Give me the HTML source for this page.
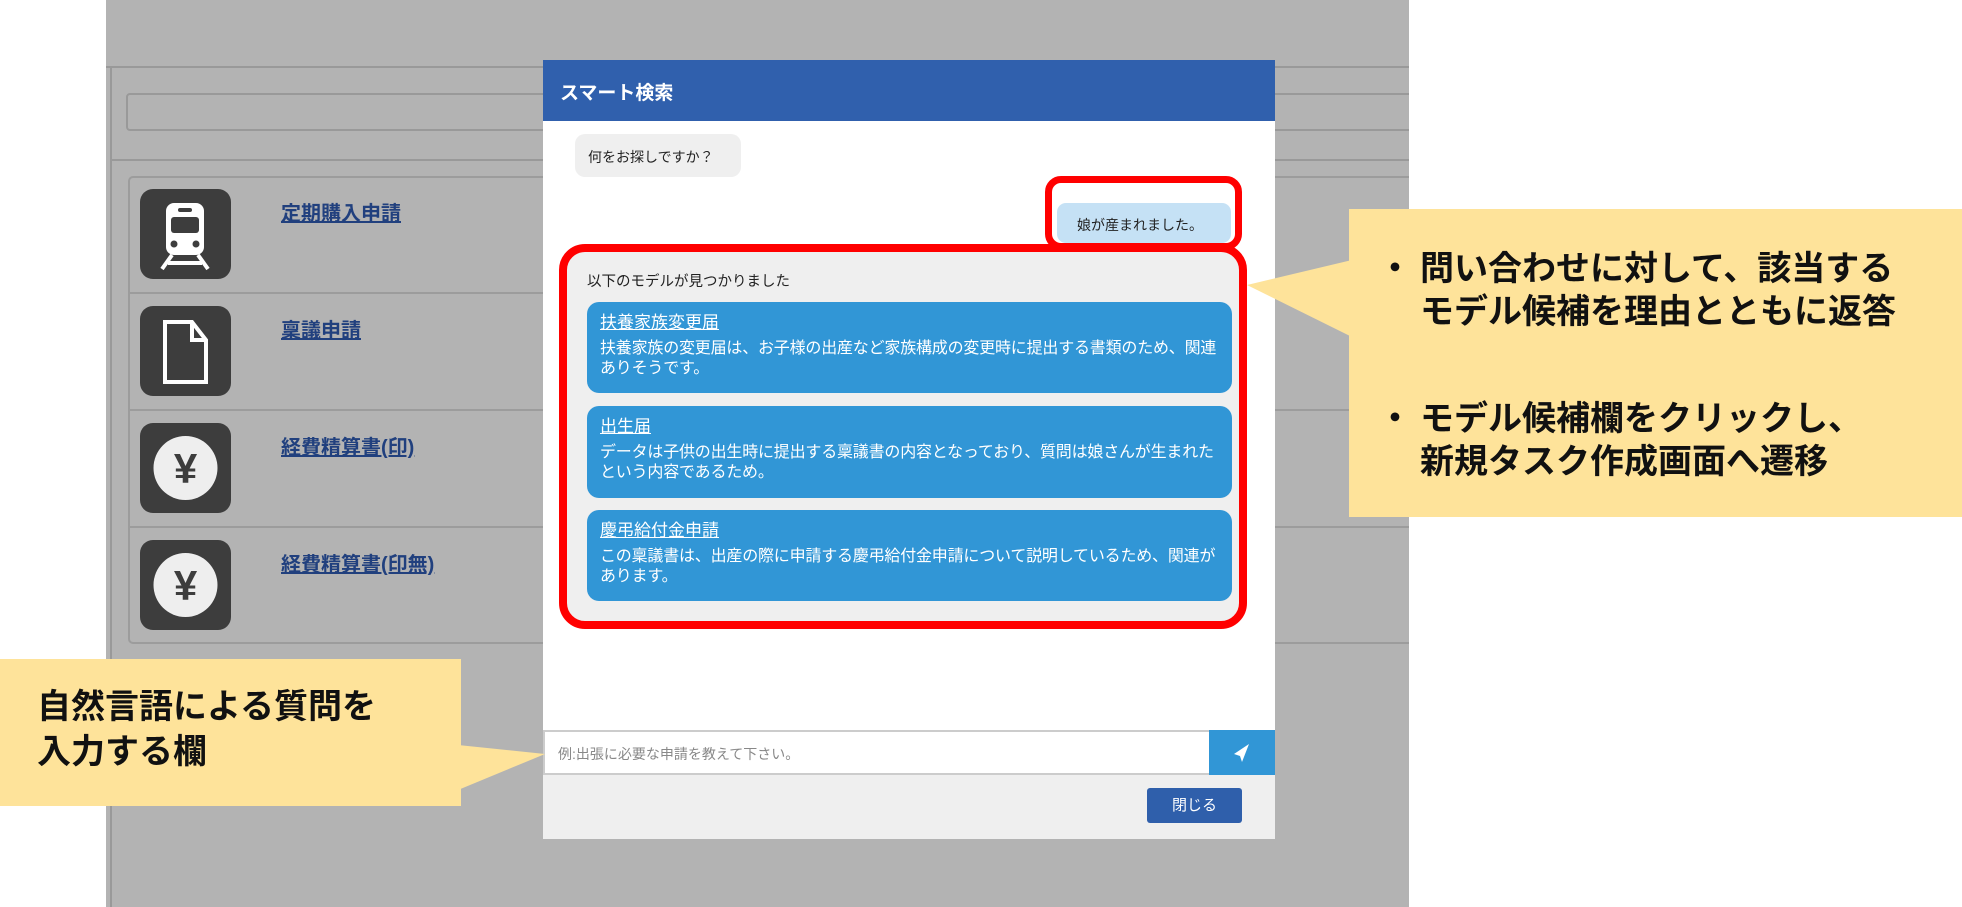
<!DOCTYPE html>
<html><head><meta charset="utf-8"><style>
*{margin:0;padding:0;box-sizing:border-box}
body{width:1962px;height:907px;position:relative;overflow:hidden;background:#fff;font-family:"Liberation Sans","Noto Sans CJK JP",sans-serif}
.a{position:absolute}
.gray{left:106px;top:0;width:1303px;height:907px;background:#b3b3b3}
.icon{left:140px;width:91px;height:90px;background:#3d3d3d;border-radius:13px}
.lnk{left:281px;font-size:20px;font-weight:bold;color:#21407e;text-decoration:underline}
.card{left:587px;width:645px;background:#3196d6;border-radius:12px;color:#fff;padding:10px 10px 0 13px}
.card .t{font-size:17px;text-decoration:underline;line-height:22px;margin-bottom:5px}
.card .d{font-size:16px;line-height:20px;letter-spacing:-0.2px;white-space:nowrap}
.call{background:#fee39a;color:#111;font-weight:bold}
</style></head><body>
<div class="a gray"></div>
<div class="a" style="left:106px;top:66px;width:1303px;height:2px;background:#999"></div>
<div class="a" style="left:110px;top:66px;width:2px;height:841px;background:#999"></div>
<div class="a" style="left:126px;top:93px;width:1300px;height:38px;border:2px solid #999;border-radius:4px"></div>
<div class="a" style="left:112px;top:159px;width:1297px;height:2px;background:#999"></div>
<div class="a" style="left:128px;top:176px;width:1300px;height:468px;border:2px solid #9c9c9c;border-radius:5px"></div>
<div class="a" style="left:128px;top:292px;width:1281px;height:2px;background:#9c9c9c"></div>
<div class="a" style="left:128px;top:409px;width:1281px;height:2px;background:#9c9c9c"></div>
<div class="a" style="left:128px;top:526px;width:1281px;height:2px;background:#9c9c9c"></div>
<div class="a" style="left:1409px;top:0;width:553px;height:907px;background:#fff"></div>

<div class="a icon" style="top:189px"><svg width="91" height="90" viewBox="0 0 91 90"><rect x="26" y="14" width="38" height="52" rx="8" fill="#fff"/><rect x="31" y="28" width="28" height="16" rx="3" fill="#3d3d3d"/><rect x="38" y="19" width="14" height="4" rx="2" fill="#3d3d3d"/><circle cx="34" cy="55" r="3.5" fill="#3d3d3d"/><circle cx="56" cy="55" r="3.5" fill="#3d3d3d"/><path d="M32 66 L22 80 M58 66 L68 80 M28 74 H62" stroke="#fff" stroke-width="4"/></svg></div>
<div class="a lnk" style="top:197px">定期購入申請</div>
<div class="a icon" style="top:306px"><svg width="91" height="90" viewBox="0 0 91 90"><path d="M25 16 H52 L66 34 V76 H25 Z" fill="none" stroke="#fff" stroke-width="4"/><path d="M52 16 V34 H66" fill="none" stroke="#fff" stroke-width="4"/></svg></div>
<div class="a lnk" style="top:314px">稟議申請</div>
<div class="a icon" style="top:423px"><svg width="91" height="90" viewBox="0 0 91 90"><circle cx="45.5" cy="45" r="32" fill="#eee"/><text x="45.5" y="60" font-size="42" font-weight="bold" text-anchor="middle" fill="#3d3d3d" font-family="Liberation Sans,sans-serif">¥</text></svg></div>
<div class="a lnk" style="top:431px">経費精算書(印)</div>
<div class="a icon" style="top:540px"><svg width="91" height="90" viewBox="0 0 91 90"><circle cx="45.5" cy="45" r="32" fill="#eee"/><text x="45.5" y="60" font-size="42" font-weight="bold" text-anchor="middle" fill="#3d3d3d" font-family="Liberation Sans,sans-serif">¥</text></svg></div>
<div class="a lnk" style="top:548px">経費精算書(印無)</div>

<div class="a" style="left:543px;top:60px;width:732px;height:779px;background:#fff"></div>
<div class="a" style="left:543px;top:60px;width:732px;height:61px;background:#3060ad;color:#fff;font-size:19px;font-weight:bold;padding:18px 0 0 17px">スマート検索</div>
<div class="a" style="left:575px;top:134px;width:166px;height:43px;background:#efefef;border-radius:10px;font-size:14px;padding:13px 0 0 13px;color:#222">何をお探しですか？</div>
<div class="a" style="left:1045px;top:176px;width:197px;height:74px;border:7px solid #f00;border-radius:16px"></div>
<div class="a" style="left:1057px;top:203px;width:174px;height:40px;background:#c5e1f5;border-radius:9px;font-size:14px;padding:12px 0 0 20px;color:#222">娘が産まれました。</div>
<div class="a" style="left:559px;top:244px;width:688px;height:385px;border:8px solid #f00;border-radius:26px;background:#efefef"></div>
<div class="a" style="left:587px;top:270px;font-size:14.5px;color:#222">以下のモデルが見つかりました</div>
<div class="a card" style="top:302px;height:91px"><div class="t">扶養家族変更届</div><div class="d">扶養家族の変更届は、お子様の出産など家族構成の変更時に提出する書類のため、関連<br>ありそうです。</div></div>
<div class="a card" style="top:406px;height:92px"><div class="t">出生届</div><div class="d">データは子供の出生時に提出する稟議書の内容となっており、質問は娘さんが生まれた<br>という内容であるため。</div></div>
<div class="a card" style="top:510px;height:91px"><div class="t">慶弔給付金申請</div><div class="d">この稟議書は、出産の際に申請する慶弔給付金申請について説明しているため、関連が<br>あります。</div></div>
<div class="a" style="left:543px;top:730px;width:666px;height:45px;border:2px solid #ccc;border-right:none;background:#fff;font-size:14px;color:#888;padding:12px 0 0 13px">例:出張に必要な申請を教えて下さい。</div>
<div class="a" style="left:1209px;top:730px;width:66px;height:45px;background:#3196d6"><svg width="66" height="45" viewBox="0 0 66 45"><path d="M40 14 L25 24 L31 26 L33 32 Z" fill="#fff"/></svg></div>
<div class="a" style="left:543px;top:775px;width:732px;height:64px;background:#efefef"></div>
<div class="a" style="left:1147px;top:788px;width:95px;height:35px;background:#2f5fab;border-radius:3px;color:#fff;font-size:15px;text-align:center;line-height:35px">閉じる</div>

<svg class="a" style="left:0;top:0" width="1962" height="907"><polygon points="1352,260 1247,285 1352,337" fill="#fee39a"/><polygon points="458,745 545,754 458,790" fill="#fee39a"/></svg>
<div class="a call" style="left:1349px;top:209px;width:613px;height:308px"></div>
<div class="a" style="left:1378px;top:248px;font-size:34px;font-weight:bold;line-height:43px;color:#111">・</div>
<div class="a" style="left:1420px;top:248px;font-size:34px;font-weight:bold;line-height:43px;color:#111;white-space:nowrap">問い合わせに対して、該当する<br>モデル候補を理由とともに返答</div>
<div class="a" style="left:1378px;top:398px;font-size:34px;font-weight:bold;line-height:43px;color:#111">・</div>
<div class="a" style="left:1420px;top:398px;font-size:34px;font-weight:bold;line-height:43px;color:#111;white-space:nowrap">モデル候補欄をクリックし、<br>新規タスク作成画面へ遷移</div>
<div class="a call" style="left:0;top:659px;width:461px;height:147px"></div>
<div class="a" style="left:37px;top:685px;font-size:34px;font-weight:bold;line-height:45px;color:#111;white-space:nowrap">自然言語による質問を<br>入力する欄</div>
</body></html>
